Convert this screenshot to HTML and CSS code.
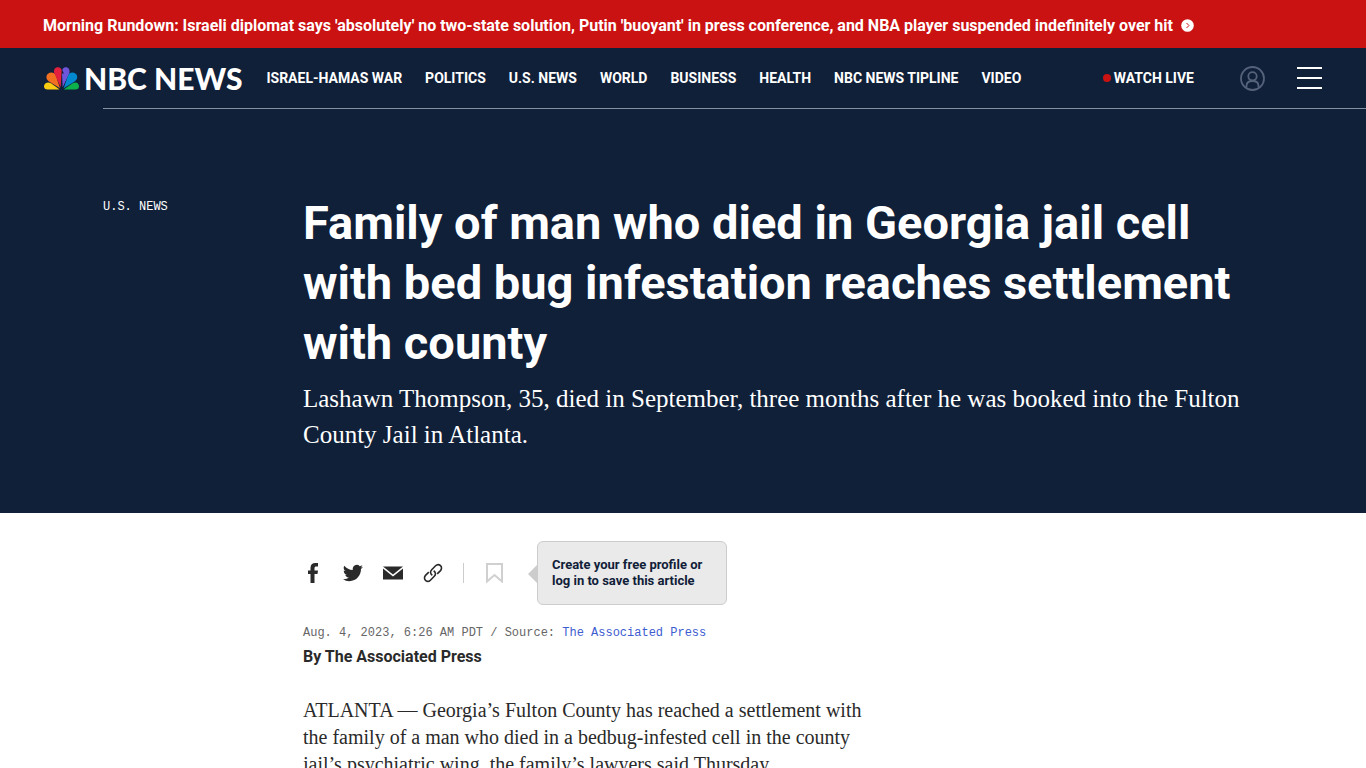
FILE: index.html
```
<!DOCTYPE html>
<html lang="en">
<head>
  <meta charset="UTF-8">
  <meta name="viewport" content="width=device-width, initial-scale=1">
  <title>Family of man who died in Georgia jail cell with bed bug infestation reaches settlement with county</title>
  <link rel="stylesheet" href="styles.css">
</head>
<body>

  <div class="rundown">
    <a href="#">Morning Rundown: Israeli diplomat says 'absolutely' no two-state solution, Putin 'buoyant' in press conference, and NBA player suspended indefinitely over hit</a>
    <svg class="rundown-arrow" viewBox="0 0 13 13" aria-hidden="true">
      <circle cx="6.500" cy="6.500" r="6.300" fill="#fff"/>
      <path d="M5.500 4l2.500 2.500L5.500 9" fill="none" stroke="#cb1212"/>
    </svg>
  </div>

  <header class="header">
    <a class="logo" href="#">
      <svg class="peacock" viewBox="0 0 105 68" aria-hidden="true">
        <path fill="#fccc12" d="M46 66L21 48C13 43 0 46 0 57c0 6 4 10 11 10h34z"/>
        <path fill="#f37021" d="M48 63L36 26C33 16 20 13 12 20c-7 6-6 17 2 22z"/>
        <path fill="#e5203f" d="M50 60l3-49C53 4 48 0 42 0 33 0 27 8 31 18z"/>
        <path fill="#6e55dc" d="M56 60l-2-41h6l-5-9C55 4 59 0 65 0c9 0 14 8 11 18z"/>
        <path fill="#0089d0" d="M59 63l13-37c3-10 15-13 23-6 7 6 6 17-2 22z"/>
        <path fill="#0db14b" d="M60 66l26-18c8-5 19-2 19 9 0 6-4 10-11 10H61z"/>
      </svg>
      <span>NBC NEWS</span>
    </a>
    <nav class="menu">
      <a href="#">ISRAEL-HAMAS WAR</a>
      <a href="#">POLITICS</a>
      <a href="#">U.S. NEWS</a>
      <a href="#">WORLD</a>
      <a href="#">BUSINESS</a>
      <a href="#">HEALTH</a>
      <a href="#">NBC NEWS TIPLINE</a>
      <a href="#">VIDEO</a>
    </nav>
    <a class="watch" href="#">WATCH LIVE</a>
    <button class="profile" type="button" aria-label="Profile">
      <svg viewBox="0 0 25 25" fill="none" stroke="#55627a" stroke-width="1.800">
        <circle cx="12.500" cy="12.500" r="11.500"/>
        <circle cx="12.500" cy="10.300" r="4.200"/>
        <path d="M6.500 21.500v-1.500c0-3.500 2-5 6-5s6 1.500 6 5v1.500"/>
      </svg>
    </button>
    <button class="burger" type="button" aria-label="Open menu"><i></i><i></i><i></i></button>
  </header>

  <section class="hero">
    <a class="section-name" href="#">U.S. NEWS</a>
    <div class="hero-text">
      <h1>Family of man who died in Georgia jail cell with bed bug infestation reaches settlement with county</h1>
      <p>Lashawn Thompson, 35, died in September, three months after he was booked into the Fulton County Jail in Atlanta.</p>
    </div>
  </section>

  <main class="article">
    <div class="share">
      <a href="#" aria-label="Facebook">
        <svg viewBox="0 0 20 20"><path d="M7.500 20v-9H5V7.500h2.500V5c0-3.300 1.600-5 5-5H15v3.600h-1.700c-1.300 0-1.800.5-1.800 1.700v2.200H15l-.5 3.500h-3v9z"/></svg>
      </a>
      <a href="#" aria-label="Twitter">
        <svg viewBox="0 0 24 24"><path d="M23.950 4.570a10 10 0 0 1-2.820.77 4.960 4.960 0 0 0 2.160-2.720c-.95.550-2 .950-3.130 1.180a4.920 4.920 0 0 0-8.380 4.480C7.690 8.100 4.070 6.130 1.640 3.160a4.920 4.920 0 0 0 1.520 6.570 4.900 4.900 0 0 1-2.230-.61v.06a4.920 4.920 0 0 0 3.950 4.830 5 5 0 0 1-2.210.08 4.940 4.940 0 0 0 4.600 3.420A9.870 9.870 0 0 1 0 19.540a14 14 0 0 0 7.550 2.210c9.050 0 14-7.500 14-13.980 0-.21 0-.42-.02-.63a9.940 9.940 0 0 0 2.420-2.570z"/></svg>
      </a>
      <a href="#" aria-label="Email">
        <svg viewBox="0 0 20 20"><path d="M0 3.500h20L10 11.500zM0 5.500v11h20v-11l-10 8z"/></svg>
      </a>
      <button type="button" aria-label="Copy link">
        <svg viewBox="0 0 20 20" fill="none" stroke="#2a2a2a" stroke-width="1.600"><path d="M9.300 12.300C7.200 11 7 8.400 8.700 6.700l3.900-3.900c1.500-1.500 3.600-1.300 4.900-.1s1.400 3.400 0 4.900l-3.300 3.300M10.700 7.700c2.100 1.300 2.300 3.900.6 5.600l-3.900 3.900c-1.500 1.500-3.600 1.300-4.900.1s-1.400-3.400 0-4.900l3.300-3.300"/></svg>
      </button>
      <span class="divider"></span>
      <button type="button" aria-label="Save article">
        <svg viewBox="0 0 20 20" fill="none" stroke="#d0d0d0" stroke-width="2"><path d="M3 1h15v17.500l-7.500-6.500L3 18.500z"/></svg>
      </button>
      <div class="tip">Create your free profile or<br>log in to save this article</div>
    </div>

    <div class="source">Aug. 4, 2023, 6:26 AM PDT / Source: <a href="#">The Associated Press</a></div>
    <div class="byline">By The Associated Press</div>

    <p class="story">ATLANTA — Georgia’s Fulton County has reached a settlement with the family of a man who died in a bedbug-infested cell in the county jail’s psychiatric wing, the family’s lawyers said Thursday.</p>
  </main>

</body>
</html>
```
FILE: styles.css
```
:root {
  --navy: #102038;
  --red: #cb1212;
  --ink: #2a2a2a;
  --head: Roboto, sans-serif;
  --serif: 'Liberation Serif', serif;
  --mono: 'Liberation Mono', monospace;
}

* {
  box-sizing: border-box;
}

body {
  margin: 0;
  background: #fff;
  color: var(--ink);
  font-family: var(--head);
}

a {
  color: inherit;
  text-decoration: none;
}

button {
  padding: 0;
  border: 0;
  background: none;
  cursor: pointer;
}

svg {
  display: block;
}

/* top red bar */
.rundown {
  display: flex;
  align-items: center;
  gap: 8px;
  min-height: 48px;
  padding: 2px 43px 0;
  background: var(--red);
  color: #fff;
  font-size: 16px;
  font-weight: 700;
}

.rundown-arrow {
  flex: none;
  width: 13px;
  height: 13px;
}

/* header */
.header {
  display: flex;
  align-items: center;
  height: 60px;
  padding: 0 44px;
  background: var(--navy);
  color: #fff;
  font-size: 14px;
  font-weight: 700;
}

.logo {
  display: flex;
  align-items: center;
  gap: 5px;
  margin-right: 24px;
  font: 900 30px/30px Lato, sans-serif;
  white-space: nowrap;
}

.peacock {
  width: 35px;
  height: 23px;
}

.menu {
  display: flex;
  gap: 23px;
  white-space: nowrap;
}

.watch {
  display: flex;
  align-items: center;
  gap: 3px;
  margin-left: auto;
  white-space: nowrap;
}

.watch::before {
  content: '';
  width: 8px;
  height: 8px;
  border-radius: 50%;
  background: var(--red);
}

.profile {
  flex: none;
  width: 25px;
  margin: 0 32px 0 46px;
}

.burger {
  display: flex;
  flex: none;
  flex-direction: column;
  gap: 8px;
  width: 25px;
}

.burger i {
  height: 2px;
  background: #fff;
}

/* headline */
.hero {
  display: grid;
  grid-template-columns: 200px 1fr;
  padding: 0 103px 60px;
  background: linear-gradient(#8790a0, #8790a0) 103px 0 / 100% 1px no-repeat var(--navy);
  color: #fff;
}

.section-name {
  padding-top: 91px;
  font: 12px/16px var(--mono);
}

.hero-text {
  padding-top: 85px;
}

h1 {
  margin: 0;
  font-size: 47px;
  line-height: 60px;
}

.hero-text p {
  margin: 8px 0 0;
  font: 25px/36px var(--serif);
}

/* article */
.article {
  max-width: 863px;
  padding: 28px 0 60px 303px;
}

.share {
  display: flex;
  align-items: center;
  gap: 20px;
}

.share svg {
  width: 20px;
  height: 20px;
}

.share a {
  color: var(--ink);
}

.share a svg {
  fill: currentColor;
}

.divider {
  width: 1px;
  height: 20px;
  background: #ccc;
}

.tip {
  position: relative;
  width: 190px;
  margin-left: 13px;
  padding: 15px 14px;
  border: 1px solid #ccc;
  border-radius: 6px;
  background: #eaeaea;
  color: var(--navy);
  font-size: 13px;
  font-weight: 700;
  line-height: 16px;
  white-space: nowrap;
}

.tip::before {
  content: '';
  position: absolute;
  top: 22px;
  left: -10px;
  border: 10px solid transparent;
  border-left: 0;
  border-right-color: #ccc;
}

.source {
  margin-top: 20px;
  color: #666;
  font: 12px/16px var(--mono);
}

.source a {
  color: #3d5ccf;
}

.byline {
  margin-top: 4px;
  font-size: 16px;
  font-weight: 700;
  line-height: 24px;
}

.story {
  margin: 28px 0 0;
  font: 20px/27px var(--serif);
}
```
